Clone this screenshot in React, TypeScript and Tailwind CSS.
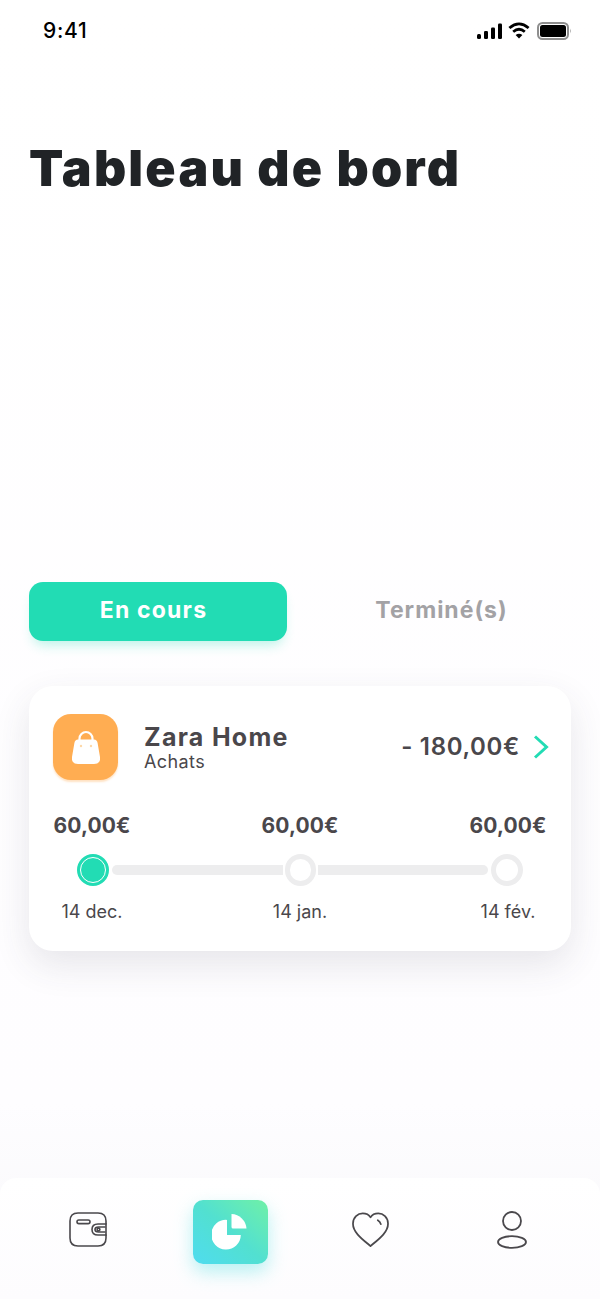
import React from 'react';

const steps = [
  { amount: '60,00€', date: '14 dec.' },
  { amount: '60,00€', date: '14 jan.' },
  { amount: '60,00€', date: '14 fév.' },
];

function StatusIcons() {
  return (
    <div className="flex items-center gap-[4px]">
      <svg width="25" height="16" viewBox="0 0 25 16" fill="#000">
        <rect x="0" y="11" width="4" height="5" rx="1.5" />
        <rect x="7" y="8" width="4" height="8" rx="1.2" />
        <rect x="14" y="4.5" width="4" height="11.5" rx="1.2" />
        <rect x="21" y="0.5" width="4" height="15.5" rx="1.2" />
      </svg>
      <svg width="22" height="17" viewBox="0 0 22 17" fill="none" stroke="#000" strokeWidth="2.8" className="ml-[2px]">
        <path d="M1.4 6 Q11 -2.2 20.6 6" />
        <path d="M5.2 9.7 Q11 4.8 16.8 9.7" />
        <path d="M11 16.4 L7.6 13 Q11 10.4 14.4 13 Z" fill="#000" stroke="none" />
      </svg>
      <svg width="35" height="18" viewBox="0 0 35 18" className="ml-[3px]">
        <rect x="1" y="1" width="30" height="16" rx="4.5" fill="none" stroke="#8e8e8e" strokeWidth="2" />
        <rect x="3" y="3" width="26" height="12" rx="2.5" fill="#000" />
        <path d="M33 6.5 Q34.6 9 33 11.5 Z" fill="#9a9a9a" />
      </svg>
    </div>
  );
}

function BagIcon() {
  return (
    <svg width="30" height="36" viewBox="0 0 30 36">
      <path d="M8.5 13 V9.5 a6.5 6.5 0 0 1 13 0 V13" fill="none" stroke="#fff" strokeWidth="2.2" />
      <path d="M7 10.5 H23 Q26 10.5 26.6 14 L29 28 Q30 35 23 35 H7 Q0 35 1 28 L3.4 14 Q4 10.5 7 10.5 Z" fill="#fff" />
      <circle cx="10" cy="17" r="1.2" fill="#fdd9a8" />
      <circle cx="20" cy="17" r="1.2" fill="#fdd9a8" />
    </svg>
  );
}

function WalletIcon() {
  return (
    <svg width="40" height="36" viewBox="0 0 40 36" fill="none" stroke="#4a484c" strokeWidth="1.6" strokeLinecap="round">
      <path d="M38 12 V9 Q38 1 30 1 H10 Q2 1 2 9 V26 Q2 34 10 34 H30 Q38 34 38 26 V23" />
      <rect x="9" y="8" width="13" height="3.6" rx="1.8" />
      <path d="M38 12 H30 Q24 12 24 17.5 Q24 23 30 23 H38 Z" />
      <path d="M37 15 H30.5 Q27 15 27 17.5 Q27 20 30.5 20 H37" />
      <circle cx="30.5" cy="17.5" r="1.4" />
    </svg>
  );
}

function PieIcon() {
  return (
    <svg width="36" height="36" viewBox="0 0 36 36" fill="#fff">
      <path d="M15 6.4 A14.8 14.8 0 1 0 28.8 21.4 L15 21.4 Z" transform="translate(0 -0.5)" />
      <path d="M19.5 0 A15.5 15.5 0 0 1 34.5 14.6 L21 14.6 Q19.5 14.6 19.5 13 Z" />
    </svg>
  );
}

function HeartIcon() {
  return (
    <svg width="37" height="36" viewBox="0 0 38 36" fill="none" stroke="#4a484c" strokeWidth="1.8" strokeLinecap="round" strokeLinejoin="round">
      <path d="M19 34.5 C12 28.5 1 21 1 11.5 C1 5 6 1 11 1 C14.5 1 17.5 2.6 19 5 C20.5 2.6 23.5 1 27 1 C32 1 37 5 37 11.5 C37 21 26 28.5 19 34.5 Z" />
      <path d="M26.5 8 C28.2 9 29.2 10.4 29.6 12" />
    </svg>
  );
}

function UserIcon() {
  return (
    <svg width="32" height="38" viewBox="0 0 32 38" fill="none" stroke="#4a484c" strokeWidth="1.8">
      <circle cx="16" cy="10" r="9" />
      <ellipse cx="16" cy="31" rx="14" ry="5.8" />
    </svg>
  );
}

export default function App() {
  return (
    <div className="w-[600px] h-[1299px] overflow-hidden flex flex-col bg-gradient-to-b from-[#ffffff] via-[#fefdff] via-85% to-[#f7f7f9] font-['Inter','Liberation_Sans',sans-serif]">
      {/* Status bar */}
      <div className="h-[60px] shrink-0 flex items-center justify-between pl-[43px] pr-[28px] pt-[1px]">
        <span className="text-[21px] font-medium tracking-[0.7px] text-black leading-none">9:41</span>
        <StatusIcons />
      </div>

      <h1 className="mt-[75px] ml-[29px] h-[66px] text-[50px] leading-[66px] font-black text-[#202326] tracking-[2.2px] whitespace-nowrap">
        Tableau de bord
      </h1>

      {/* Tabs */}
      <div className="mt-[381px] mx-[29px] flex items-center">
        <div className="w-[258px] h-[59px] rounded-[14px] bg-[#22dcb4] shadow-[0_8px_12px_-4px_rgba(34,220,180,0.3)] flex items-center justify-center pr-[9px] pb-[3px] text-[23px] font-bold tracking-[1.2px] text-white">
          En cours
        </div>
        <div className="flex-1 pl-[25px] pb-[3px] flex items-center justify-center text-[23px] font-bold tracking-[1px] text-[#a3a2a5]">
          Terminé(s)
        </div>
      </div>

      {/* Card */}
      <div className="mt-[45px] mx-[29px] h-[265px] rounded-[24px] bg-white shadow-[0_14px_36px_rgba(60,55,80,0.12)] pt-[28px] px-[24px]">
        <div className="flex items-center">
          <div className="w-[65px] h-[66px] rounded-[18px] bg-[#ffad52] shadow-[0_2px_2px_rgba(255,173,82,0.35)] flex items-center justify-center">
            <BagIcon />
          </div>
          <div className="ml-[26px] flex-1 flex flex-col">
            <span className="text-[25px] leading-[29px] font-bold text-[#4a474b] tracking-[1.3px]">Zara Home</span>
            <span className="text-[18px] leading-[20px] tracking-[0.4px] text-[#4a474b]">Achats</span>
          </div>
          <span className="text-[24px] font-semibold tracking-[0.65px] text-[#4a474b]">- 180,00€</span>
          <svg width="16" height="24" viewBox="0 0 16 24" fill="none" stroke="#22dcb4" strokeWidth="3" className="ml-[13px] mr-[-2px]">
            <path d="M2 1.5 L13.5 12 L2 22.5" />
          </svg>
        </div>

        <div className="mt-[33px] flex justify-between">
          {steps.map((s, i) => (
            <span key={i} className="w-[78px] text-center text-[21px] leading-[26px] font-bold tracking-[0.1px] text-[#4a474b] whitespace-nowrap">
              {s.amount}
            </span>
          ))}
        </div>

        {/* Stepper */}
        <div className="mt-[15px] pl-[24px] flex items-center">
          <div className="w-[32px] h-[32px] rounded-full bg-[#22dcb4] border-[3px] border-[#22dcb4] flex items-center justify-center">
            <div className="w-[26px] h-[26px] shrink-0 rounded-full bg-[#22dcb4] border border-white" />
          </div>
          <div className="ml-[3px] w-[171px] h-[10px] rounded-l-full bg-[#ededee]" />
          <div className="ml-[2px] w-[31px] h-[32px] rounded-full bg-white border-[5px] border-[#ededee]" />
          <div className="ml-[2px] w-[170px] h-[10px] rounded-r-full bg-[#ededee]" />
          <div className="ml-[3px] w-[32px] h-[32px] rounded-full bg-white border-[5px] border-[#ededee]" />
        </div>

        <div className="mt-[14px] flex justify-between">
          {steps.map((s, i) => (
            <span key={i} className="w-[78px] text-center text-[18px] leading-[24px] text-[#4a474b] whitespace-nowrap">
              {s.date}
            </span>
          ))}
        </div>
      </div>

      {/* Bottom nav */}
      <div className="mt-auto h-[121px] rounded-t-[16px] bg-gradient-to-b from-white to-[#fdfcfe] px-[50px] pt-[22px] flex justify-between items-start">
        <div className="w-[76px] h-[64px] flex items-center justify-center pb-[5px]">
          <WalletIcon />
        </div>
        <div className="ml-[1px] -mr-[1px] w-[75px] h-[64px] rounded-[10px] bg-gradient-to-tr from-[#4fdcef] via-[#52e0d0] to-[#6ff0a6] shadow-[0_8px_18px_rgba(80,225,225,0.4)] flex items-center justify-center">
          <PieIcon />
        </div>
        <div className="w-[76px] h-[64px] flex items-center justify-center pb-[4px]">
          <HeartIcon />
        </div>
        <div className="w-[76px] h-[64px] flex items-center justify-center pb-[4px]">
          <UserIcon />
        </div>
      </div>
    </div>
  );
}
